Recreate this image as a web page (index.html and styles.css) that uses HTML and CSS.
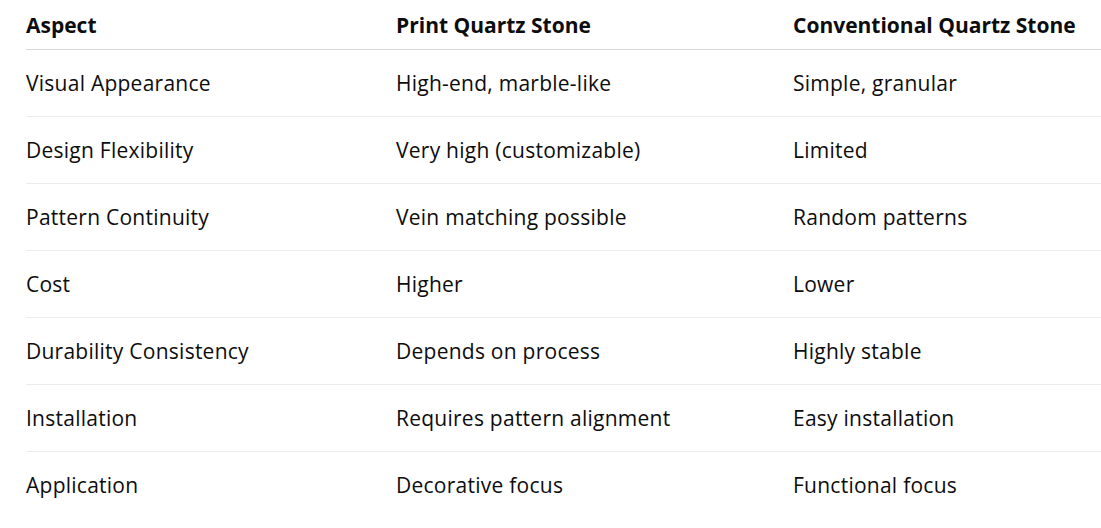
FILE: index.html
```html
<!DOCTYPE html>
<html>
<head>
<meta charset="utf-8">
<link rel="stylesheet" href="styles.css">
</head>
<body>
<table class="cmp">
  <thead>
    <tr><th class="c1">Aspect</th><th class="c2">Print Quartz Stone</th><th class="c3">Conventional Quartz Stone</th></tr>
  </thead>
  <tbody>
    <tr><td>Visual Appearance</td><td>High-end, marble-like</td><td>Simple, granular</td></tr>
    <tr><td>Design Flexibility</td><td>Very high (customizable)</td><td>Limited</td></tr>
    <tr><td>Pattern Continuity</td><td>Vein matching possible</td><td>Random patterns</td></tr>
    <tr><td>Cost</td><td>Higher</td><td>Lower</td></tr>
    <tr><td>Durability Consistency</td><td>Depends on process</td><td>Highly stable</td></tr>
    <tr><td>Installation</td><td>Requires pattern alignment</td><td>Easy installation</td></tr>
    <tr class="last"><td>Application</td><td>Decorative focus</td><td>Functional focus</td></tr>
  </tbody>
</table>
</body>
</html>
```
FILE: styles.css
```css
html, body {
  margin: 0;
  padding: 0;
  background: #ffffff;
}
body {
  font-family: "Open Sans", "Noto Sans", sans-serif;
  color: #0d0d0d;
  font-size: 21px;
  padding-left: 26px;
  overflow: hidden;
}
.cmp {
  border-collapse: collapse;
  width: 1075px;
  table-layout: fixed;
}
.cmp th, .cmp td {
  text-align: left;
  padding: 0;
  vertical-align: middle;
  white-space: nowrap;
}
.cmp th {
  font-weight: 700;
  height: 49px;
  border-bottom: 1px solid #d9d9d9;
}
.cmp td {
  height: 66px;
  letter-spacing: 0.25px;
  border-bottom: 1px solid #ececec;
}
.cmp tr.last td {
  border-bottom: none;
}
.c1 { width: 370px; }
.c2 { width: 397px; }
.c3 { width: 308px; }
```
